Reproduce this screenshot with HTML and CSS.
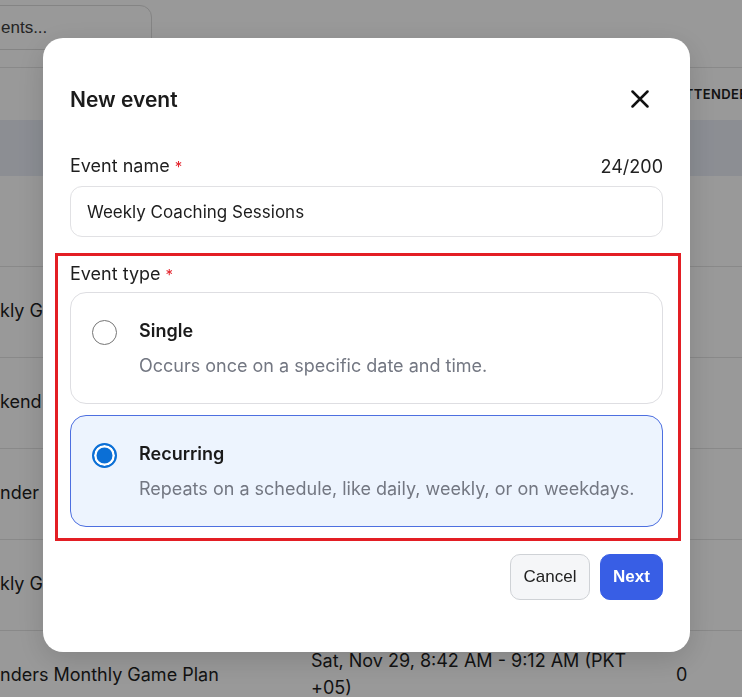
FILE: index.html
```html
<!DOCTYPE html>
<html lang="en">
<head>
<meta charset="utf-8">
<title>New event</title>
<link rel="stylesheet" href="styles.css">
</head>
<body>
<div class="page">
  <div class="toolbar">
    <div class="search">ents...</div>
  </div>
  <div class="table">
    <div class="thead">
      <div class="th"></div>
      <div class="th">Date</div>
      <div class="th">Attendees</div>
    </div>
    <div class="band"></div>
    <div class="tr"><div class="td"></div><div class="td">Mon, Nov 24, 9:00 AM - 9:30 AM</div><div class="td">0</div></div>
    <div class="tr"><div class="td">kly Game Plan</div><div class="td">Tue, Nov 25, 8:42 AM - 9:12 AM</div><div class="td">0</div></div>
    <div class="tr"><div class="td">kend Review</div><div class="td">Wed, Nov 26, 8:42 AM - 9:12 AM</div><div class="td">0</div></div>
    <div class="tr"><div class="td">nder Sync</div><div class="td">Thu, Nov 27, 8:42 AM - 9:12 AM</div><div class="td">0</div></div>
    <div class="tr"><div class="td">kly Game Plan</div><div class="td">Fri, Nov 28, 8:42 AM - 9:12 AM</div><div class="td">0</div></div>
    <div class="tr"><div class="td">nders Monthly Game Plan</div><div class="td">Sat, Nov 29, 8:42 AM - 9:12 AM (PKT +05)</div><div class="td">0</div></div>
  </div>
</div>

<div class="overlay">
  <div class="modal">
    <div class="modal-head">
      <h2 class="modal-title">New event</h2>
      <button class="close" aria-label="Close">
        <svg width="18" height="18" viewBox="0 0 18 18"><path d="M1.5 1.5 L16.5 16.5 M16.5 1.5 L1.5 16.5" stroke="#111" stroke-width="2.5" stroke-linecap="round"/></svg>
      </button>
    </div>

    <div class="field-head">
      <span class="label">Event name <span class="req">*</span></span>
      <span class="counter">24/200</span>
    </div>
    <div class="input">Weekly Coaching Sessions</div>

    <div class="type-section">
      <div class="label type-label">Event type <span class="req">*</span></div>
      <div class="options">
        <div class="option">
          <span class="radio"></span>
          <div class="opt-text">
            <div class="opt-title">Single</div>
            <div class="opt-desc">Occurs once on a specific date and time.</div>
          </div>
        </div>
        <div class="option selected">
          <span class="radio checked"></span>
          <div class="opt-text">
            <div class="opt-title">Recurring</div>
            <div class="opt-desc">Repeats on a schedule, like daily, weekly, or on weekdays.</div>
          </div>
        </div>
      </div>
    </div>

    <div class="actions">
      <button class="btn btn-cancel">Cancel</button>
      <button class="btn btn-next">Next</button>
    </div>

    <div class="annotation"></div>
  </div>
</div>
</body>
</html>
```

FILE: styles.css
```css
* { box-sizing: border-box; }

body {
  margin: 0;
  width: 742px;
  height: 697px;
  overflow: hidden;
  background: #ffffff;
  font-family: Inter, "Noto Sans", sans-serif;
  color: #222;
}

/* ---------- background page ---------- */
.page {
  width: 742px;
  overflow: hidden;
}

.toolbar {
  height: 68px;
  padding-top: 5px;
  border-bottom: 1px solid #e4e4e4;
}

.search {
  width: 182px;
  height: 45px;
  margin-left: -30px;
  padding-left: 30px;
  border: 1px solid #dcdcdc;
  border-radius: 12px;
  display: flex;
  align-items: center;
  font-family: "Liberation Sans", Arial, sans-serif;
  font-size: 17px;
  color: #3c3c3c;
}

.table {
  margin-left: -19px;
}

.thead,
.tr {
  display: grid;
  grid-template-columns: 330px 365px 66px;
  align-items: center;
}

.thead {
  height: 52px;
}

.th {
  font-size: 13px;
  font-weight: 600;
  letter-spacing: 0.03em;
  text-transform: uppercase;
  color: #222;
  white-space: nowrap;
  overflow: hidden;
}

.band {
  height: 56px;
  background: #e9edf6;
}

.tr {
  height: 91px;
  padding-bottom: 4px;
  border-bottom: 1px solid #e4e4e4;
  font-size: 18px;
  color: #1e1e1e;
}

.tr:nth-of-type(1) { height: 89px; }
.tr:nth-of-type(2) { height: 90px; }

.td {
  line-height: 27px;
  white-space: nowrap;
  overflow: hidden;
}

.td:nth-child(1) { padding-left: 19px; }

.td:nth-child(2) {
  padding-right: 30px;
  white-space: normal;
}

/* ---------- overlay + modal ---------- */
.overlay {
  position: fixed;
  inset: 0;
  background: rgba(0, 0, 0, 0.4);
  display: flex;
  align-items: center;
  justify-content: center;
  padding: 0 9px 7px 0;
}

.modal {
  position: relative;
  width: 647px;
  background: #fff;
  border-radius: 20px;
  padding: 41px 27px 52px;
  display: flex;
  flex-direction: column;
  box-shadow: 0 8px 30px rgba(0, 0, 0, 0.15);
}

.modal-head {
  height: 40px;
  display: flex;
  align-items: center;
  justify-content: space-between;
}

.modal-title {
  margin: 0;
  font-size: 21px;
  font-weight: 600;
  color: #1b1b1b;
}

.close {
  width: 26px;
  height: 26px;
  margin-right: 10px;
  padding: 0;
  border: 0;
  background: transparent;
  display: flex;
  align-items: center;
  justify-content: center;
}

.field-head {
  margin-top: 35px;
  height: 24px;
  display: flex;
  justify-content: space-between;
  align-items: center;
}

.label {
  font-size: 18px;
  line-height: 24px;
  color: #1f1f1f;
}

.req {
  color: #e3222b;
  font-size: 15px;
}

.counter {
  font-size: 18px;
  color: #222;
}

.input {
  margin-top: 8px;
  height: 51px;
  border: 1px solid #e1e1e4;
  border-radius: 12px;
  padding-left: 16px;
  display: flex;
  align-items: center;
  font-size: 17px;
  color: #1c1c1c;
}

.type-section {
  margin-top: 25px;
}

.type-label {
  height: 24px;
}

.options {
  margin-top: 6px;
  display: flex;
  flex-direction: column;
  gap: 11px;
}

.option {
  height: 112px;
  border: 1px solid #dedee2;
  border-radius: 16px;
  padding: 26px 8px 25px 21px;
  display: grid;
  grid-template-columns: 25px 1fr;
  column-gap: 22px;
  align-items: start;
}

.option.selected {
  background: #edf4fe;
  border-color: #4d6fe0;
}

.radio {
  width: 25px;
  height: 25px;
  margin-top: 1px;
  border-radius: 50%;
  border: 1.5px solid #767676;
  background: #fff;
}

.radio.checked {
  border: 2px solid #0b6fd6;
  box-shadow: inset 0 0 0 2.5px #fff;
  background: #0b6fd6;
}

.opt-title {
  font-size: 18px;
  line-height: 24px;
  font-weight: 600;
  color: #1a1a1a;
}

.opt-desc {
  margin-top: 11px;
  font-size: 18px;
  line-height: 24px;
  color: #737782;
  white-space: nowrap;
}

.actions {
  margin-top: 27px;
  display: flex;
  justify-content: flex-end;
  gap: 10px;
}

.btn {
  height: 46px;
  border-radius: 10px;
  font-family: "Liberation Sans", Arial, sans-serif;
  font-size: 17px;
  padding: 0;
}

.btn-cancel {
  width: 80px;
  background: #f5f6f8;
  border: 1px solid #cfd2d6;
  color: #222;
}

.btn-next {
  width: 63px;
  background: #385ee5;
  border: 1px solid #385ee5;
  color: #fff;
  font-weight: 700;
}

/* red highlight annotation drawn over the event type section */
.annotation {
  position: absolute;
  left: 12px;
  top: 215px;
  width: 626px;
  height: 288px;
  border: 3px solid #e31e24;
  pointer-events: none;
}
```
